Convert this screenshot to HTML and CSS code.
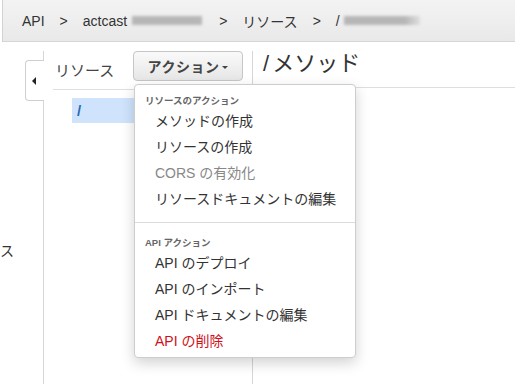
FILE: index.html
```html
<!DOCTYPE html>
<html lang="ja">
<head>
    <meta charset="UTF-8">
    <meta name="viewport" content="width=device-width, initial-scale=1.0">
    <title>API Gateway - リソース</title>
    <link rel="stylesheet" href="styles.css">
</head>
<body>
    <div class="breadcrumb">
        <span class="crumb">API</span>
        <span class="sep">&gt;</span>
        <span class="crumb">actcast</span>
        <span class="masked masked-name"></span>
        <span class="sep">&gt;</span>
        <span class="crumb">リソース</span>
        <span class="sep">&gt;</span>
        <span class="crumb">/</span>
        <span class="masked masked-path"></span>
    </div>

    <div class="main">
        <div class="side">
            <div class="collapse-tab"><span class="arrow"></span></div>
            <div class="cut-label">ス</div>
        </div>

        <div class="resources">
            <div class="res-header">
                <span class="res-title">リソース</span>
                <div class="actions">
                    <button class="action-btn">アクション<span class="caret"></span></button>
                    <div class="menu">
                        <div class="menu-section">
                            <div class="menu-head">リソースのアクション</div>
                            <div class="menu-item">メソッドの作成</div>
                            <div class="menu-item">リソースの作成</div>
                            <div class="menu-item disabled">CORS の有効化</div>
                            <div class="menu-item">リソースドキュメントの編集</div>
                        </div>
                        <div class="menu-section">
                            <div class="menu-head">API アクション</div>
                            <div class="menu-item">API のデプロイ</div>
                            <div class="menu-item">API のインポート</div>
                            <div class="menu-item">API ドキュメントの編集</div>
                            <div class="menu-item danger">API の削除</div>
                        </div>
                    </div>
                </div>
            </div>
            <div class="tree">
                <div class="tree-item selected">/</div>
            </div>
        </div>

        <div class="detail">
            <h1 class="detail-title"><span class="slash">/</span>メソッド</h1>
        </div>
    </div>
</body>
</html>
```

FILE: styles.css
```css
body {
    margin: 0;
    font-family: "Liberation Sans", "Noto Sans CJK JP", sans-serif;
    color: #333;
    background: #fff;
    height: 384px;
    overflow: hidden;
}

/* breadcrumb bar */
.breadcrumb {
    height: 41px;
    margin-left: 2px;
    border-left: 1px solid #d2d2d2;
    border-bottom: 1px solid #d6d6d6;
    background: linear-gradient(#f3f3f3, #e9e9e9);
    display: flex;
    align-items: center;
    padding-left: 19px;
    font-size: 14px;
    color: #333;
}
.sep {
    margin: 0 15px;
}
.masked {
    display: inline-block;
    height: 9px;
    background: #a9a9a9;
    filter: blur(1.5px);
    opacity: 0.8;
}
.masked-name {
    width: 70px;
    margin-left: 5px;
    margin-right: 2px;
}
.masked-path {
    width: 76px;
    margin-left: 4px;
    background: linear-gradient(90deg, #a9a9a9 80%, #dcdcdc);
}

/* main area */
.main {
    display: flex;
    padding-top: 9px;
    height: 333px;
}
.side {
    width: 43px;
    flex-shrink: 0;
    position: relative;
    z-index: 2;
}
.collapse-tab {
    width: 18px;
    height: 39px;
    margin: 9px -1px 0 25px;
    border: 1px solid #cfcfcf;
    border-right: none;
    border-radius: 4px 0 0 4px;
    background: #fff;
    display: flex;
    align-items: center;
    justify-content: center;
}
.arrow {
    width: 0;
    height: 0;
    border-top: 4px solid transparent;
    border-bottom: 4px solid transparent;
    border-right: 4px solid #222;
    margin-right: 2px;
}
.cut-label {
    margin-top: 140px;
    font-size: 14px;
    line-height: 20px;
    color: #333;
}

/* resource tree panel */
.resources {
    width: 208px;
    flex-shrink: 0;
    border-left: 1px solid #d6d6d6;
}
.res-header {
    margin-left: 9px;
    padding: 0 0 8px 2px;
    border-bottom: 1px solid #dedede;
    display: flex;
    align-items: center;
}
.res-title {
    font-size: 15px;
    color: #444;
    width: 78px;
    padding-top: 7px;
}
.actions {
    position: relative;
}
.action-btn {
    height: 30px;
    width: 110px;
    padding: 0;
    border: 1px solid #c6c6c6;
    border-radius: 4px;
    background: linear-gradient(#fafafa, #e6e6e6);
    font-family: inherit;
    font-size: 14px;
    font-weight: bold;
    color: #444;
    letter-spacing: 0.5px;
    display: flex;
    align-items: center;
    justify-content: center;
}
.caret {
    width: 0;
    height: 0;
    border-left: 3px solid transparent;
    border-right: 3px solid transparent;
    border-top: 3px solid #444;
    margin-left: 3px;
    margin-top: 2px;
}
.tree {
    padding: 8px 0 0 28px;
}
.tree-item {
    height: 25px;
    line-height: 25px;
    padding-left: 5px;
    font-size: 15px;
    color: #2a6cb6;
    font-weight: bold;
}
.selected {
    background: #cfe4fc;
}

/* dropdown menu */
.menu {
    position: absolute;
    top: 33px;
    left: 1px;
    width: 220px;
    background: #fff;
    border: 1px solid #cdcdcd;
    border-radius: 4px;
    box-shadow: 0 5px 14px rgba(0, 0, 0, 0.18);
    z-index: 5;
    padding-bottom: 3px;
}
.menu-section {
    padding: 9px 0 10px;
}
.menu-section + .menu-section {
    border-top: 1px solid #dcdcdc;
    padding-top: 13px;
    padding-bottom: 0;
}
.menu-head {
    font-size: 9.5px;
    font-weight: bold;
    color: #666;
    line-height: 14px;
    padding-left: 10px;
}
.menu-item {
    font-size: 14px;
    line-height: 26px;
    padding-left: 20px;
    color: #333;
}
.menu-item.disabled {
    color: #888;
}
.menu-item.danger {
    color: #d0101b;
}

/* method detail panel */
.detail {
    flex: 1;
    border-left: 1px solid #d6d6d6;
}
.detail-title {
    margin: 0;
    font-size: 22px;
    font-weight: normal;
    line-height: 26px;
    color: #333;
    padding: 0 0 10px 10px;
    border-bottom: 1px solid #dedede;
}
.slash {
    margin-right: 3px;
}
```
